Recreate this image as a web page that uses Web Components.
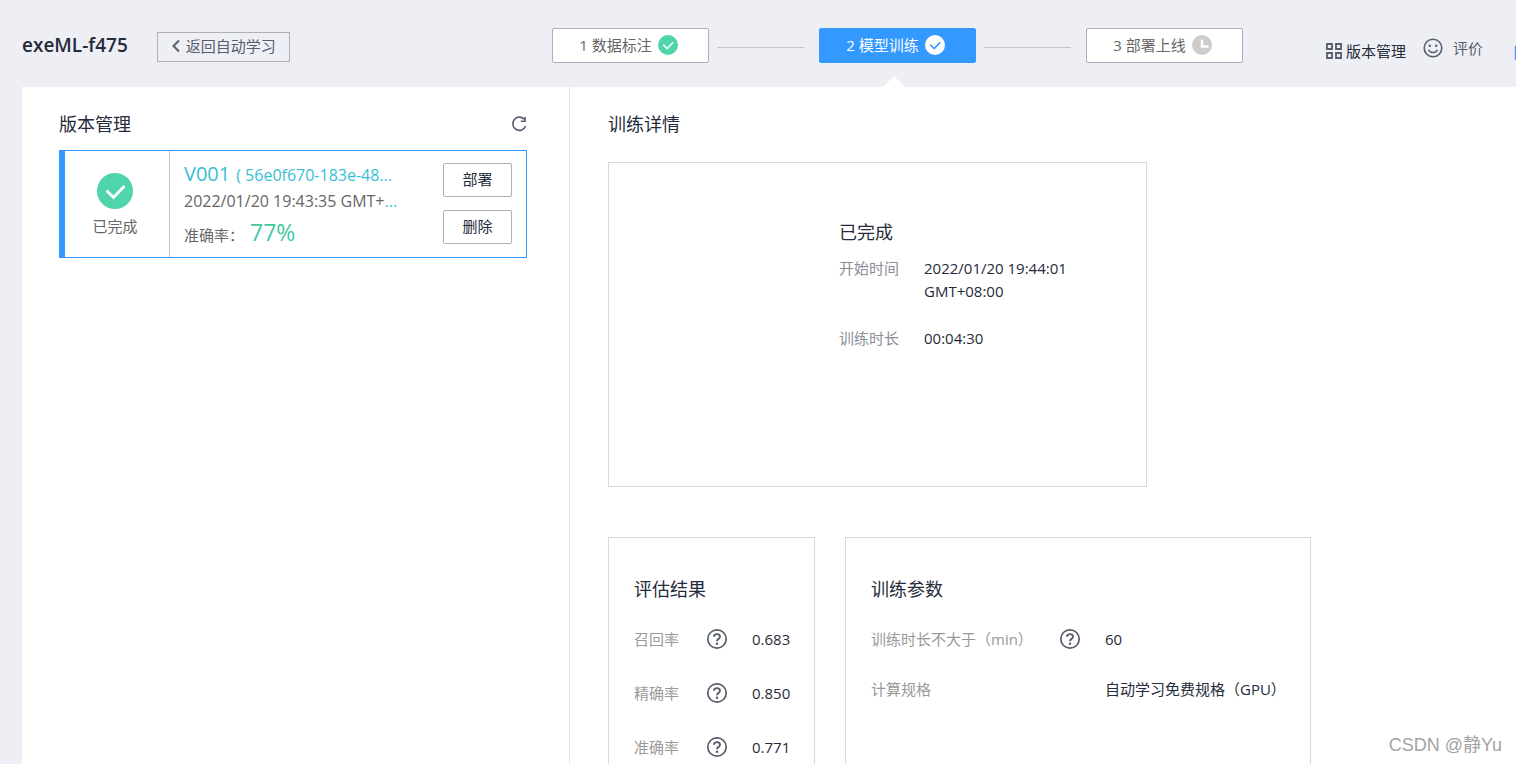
<!DOCTYPE html>
<html lang="zh-CN">
<head>
<meta charset="utf-8">
<title>exeML-f475</title>
<style>
html, body { margin: 0; height: 100%; }
body {
  --ink: #252b3a; --grey: #575d6c; --muted: #999; --blue: #3399ff; --green: #50d4ab; --line: #d9d9d9;
  background: #eeeff5; color: var(--ink); overflow: hidden;
  font: 15px/24px "Open Sans", "Noto Sans CJK SC", sans-serif;
}
</style>
</head>
<body>
<ml-app></ml-app>
<script>
const define = (name, html) => customElements.define(name, class extends HTMLElement {
  constructor() {
    super();
    const t = document.createElement('template');
    t.innerHTML = html;
    this.attachShadow({ mode: 'open' }).append(t.content);
  }
});

customElements.define('ml-icon', class extends HTMLElement {
  connectedCallback() {
    const art = {
      back: ['0 0 10 14', '<path d="M8 1.5 2.5 7 8 12.5" fill="none" stroke="currentColor" stroke-width="2"/>'],
      check: ['0 0 36 36', '<circle cx="18" cy="18" r="18" fill="currentColor"/><path d="m9.5 17.5 7 7 11-11.5" fill="none" stroke="var(--tick,#fff)" stroke-width="2.8"/>'],
      clock: ['0 0 20 20', '<circle cx="10" cy="10" r="10" fill="#ccc"/><path d="M10 4.500v7h6.500" fill="none" stroke="#fff" stroke-width="2.600"/>'],
      grid: ['0 0 16 16', '<path d="M1 1h5v5H1zM10 1h5v5h-5zM1 10h5v5H1zM10 10h5v5h-5z" fill="none" stroke="currentColor" stroke-width="1.800"/>'],
      smile: ['0 0 20 20', '<circle cx="10" cy="10" r="8.800" fill="none" stroke="currentColor" stroke-width="1.600"/><circle cx="6.800" cy="7.800" r="1.200" fill="currentColor"/><circle cx="13.200" cy="7.800" r="1.200" fill="currentColor"/><path d="M5.500 11.800c1.500 3.500 7.500 3.500 9 0" fill="none" stroke="currentColor" stroke-width="1.500"/>'],
      refresh: ['0 0 16 16', '<path d="M13.200 3.200A6.600 6.600 0 1 0 14.600 10M14 1v4.200H9.800" fill="none" stroke="currentColor" stroke-width="1.600"/>'],
      help: ['0 0 22 22', '<circle cx="11" cy="11" r="9.200" fill="none" stroke="currentColor" stroke-width="1.700"/><path d="M8 8.800C8 5.200 14 5.300 14 8.700c0 2.300-3 2.100-3 4.500" fill="none" stroke="currentColor" stroke-width="1.900"/><circle cx="11" cy="15.800" r="1.200" fill="currentColor"/>']
    }[this.getAttribute('name')];
    const root = this.shadowRoot || this.attachShadow({ mode: 'open' });
    root.innerHTML = `<style>:host{display:block;flex:none}svg{display:block;width:100%;height:100%}</style><svg viewBox="${art[0]}" aria-hidden="true">${art[1]}</svg>`;
  }
});

define('ml-step', `<style>
:host { display: block; position: relative; width: 157px; }
button { font: inherit; color: #666; width: 100%; height: 35px; display: flex; align-items: center; justify-content: center; gap: 6px; padding: 0 4px 2px 0; background: #fff; border: 1px solid #adb0b8; border-radius: 2px; }
:host([active]) button { background: var(--blue); border-color: var(--blue); color: #fff; }
:host([active])::after { content: ""; position: absolute; left: 64px; top: 48px; border: 11px solid transparent; border-top: 0; border-bottom-color: #fff; }
</style><button type="button"><slot></slot><slot name="state"></slot></button>`);

define('ml-header', `<style>
:host { display: grid; grid-template-columns: 1fr auto 273px; height: 87px; padding-left: 22px; box-sizing: border-box; overflow: hidden; }
.left { display: flex; align-items: flex-start; padding-top: 32px; gap: 29px; }
h1 { font-size: 19px; font-weight: 600; line-height: 26px; margin: 0; }
.back { display: flex; align-items: center; gap: 5px; height: 30px; box-sizing: border-box; border: 1px solid #adb0b8; padding: 0 13px 2px; color: var(--grey); text-decoration: none; }
.back ml-icon { width: 10px; height: 14px; }
nav { display: flex; padding-top: 28px; }
hr { width: 87px; height: 1px; border: 0; background: #c3c5cc; margin: 19px 15px 0 8px; }
.s { width: 20px; height: 20px; color: var(--green); }
.on { color: #fff; --tick: var(--blue); }
.right { display: flex; padding: 36px 0 0 83px; align-items: flex-start; }
.right a { display: flex; align-items: center; color: var(--ink); text-decoration: none; }
.ver { gap: 4px; margin-top: 3px; }
.ver ml-icon { width: 16px; height: 16px; color: var(--grey); }
.right .rate { gap: 10px; margin-left: 17px; color: var(--grey); }
.rate ml-icon { width: 20px; height: 20px; }
.more { width: 2px; height: 14px; margin: 10px 0 0 auto; background: linear-gradient(90deg, #e3c8f5 50%, #4aa0f5 50%); }
</style>
<div class="left"><h1>exeML-f475</h1><a class="back" href="#"><ml-icon name="back"></ml-icon>返回自动学习</a></div>
<nav>
<ml-step>1 数据标注<ml-icon slot="state" class="s" name="check"></ml-icon></ml-step><hr>
<ml-step active>2 模型训练<ml-icon slot="state" class="s on" name="check"></ml-icon></ml-step><hr>
<ml-step>3 部署上线<ml-icon slot="state" class="s" name="clock"></ml-icon></ml-step>
</nav>
<div class="right"><a class="ver" href="#"><ml-icon name="grid"></ml-icon>版本管理</a><a class="rate" href="#"><ml-icon name="smile"></ml-icon>评价</a><span class="more"></span></div>`);

define('ml-version', `<style>
:host { display: grid; grid-template-columns: 105px 1fr 69px; border: 1px solid var(--blue); border-left-width: 6px; height: 108px; box-sizing: border-box; padding-right: 14px; color: #666; }
.state { border-right: 1px solid #c3c5cc; display: flex; flex-direction: column; align-items: center; padding-top: 22px; gap: 5px; padding-right: 4px; }
.state ml-icon { width: 36px; height: 36px; color: var(--green); }
.info { padding: 9px 40px 0 14px; min-width: 0; }
.info > * { white-space: nowrap; }
.id { display: flex; align-items: baseline; gap: 6px; color: #38c0d6; text-decoration: none; font-size: 16px; line-height: 28px; }
.id b { font-size: 20px; font-weight: 400; }
.date { font-size: 16px; line-height: 24px; }
.acc { display: flex; align-items: baseline; gap: 6px; line-height: 38px; }
.acc strong { font-weight: 400; font-size: 23px; color: #41c9a0; }
.dots { color: #38c0d6; }
.acts { display: flex; flex-direction: column; gap: 13px; padding-top: 12px; }
button { font: inherit; color: var(--ink); height: 34px; padding: 0 0 2px; background: #fff; border: 1px solid #adb0b8; border-radius: 2px; }
</style>
<div class="state"><ml-icon name="check"></ml-icon><span>已完成</span></div>
<div class="info"><a class="id" href="#"><b>V001</b><span>( 56e0f670-183e-48...</span></a>
<div class="date">2022/01/20 19:43:35 GMT+<span class="dots">...</span></div>
<div class="acc"><span>准确率：</span><strong>77%</strong></div></div>
<div class="acts"><button type="button">部署</button><button type="button">删除</button></div>`);

define('ml-help', `<style>
:host { display: block; width: 22px; height: 22px; }
button { display: block; border: 0; padding: 0; background: none; width: 100%; height: 100%; color: var(--grey); }
ml-icon { width: 100%; height: 100%; }
</style><button type="button" aria-label="帮助"><ml-icon name="help"></ml-icon></button>`);

define('ml-card', `<style>
:host { display: block; border: 1px solid var(--line); box-sizing: border-box; padding: 37px 25px; min-height: 290px; }
h3 { margin: 0 0 24px; font-size: 18px; font-weight: 400; line-height: 28px; }
</style><h3><slot name="title"></slot></h3><slot></slot>`);

define('ml-app', `<style>
:host { display: flex; flex-direction: column; height: 100vh; position: relative; }
main { flex: 1; min-height: 0; margin-left: 22px; background: #fff; display: grid; grid-template-columns: 548px 1fr; }
h2 { font-size: 18px; font-weight: 400; line-height: 28px; margin: 0; }
aside { border-right: 1px solid #dfe1e6; padding: 23px 42px 0 37px; }
.bar { display: flex; justify-content: space-between; align-items: center; margin-bottom: 12px; }
.bar button { border: 0; background: none; padding: 0; width: 16px; height: 16px; color: var(--grey); }
.bar ml-icon { width: 16px; height: 16px; }
.pane { padding: 23px 38px 0; min-width: 0; overflow: hidden; }
.summary { max-width: 539px; height: 325px; box-sizing: border-box; border: 1px solid var(--line); margin: 24px 0 50px; padding: 55px 60px 0 230px; }
.summary h3 { font-size: 18px; font-weight: 400; line-height: 28px; margin: 0 0 11px; }
dl, dd { margin: 0; }
.summary dl { display: grid; grid-template-columns: 61px 150px; gap: 24px; line-height: 23px; }
.summary dt { color: #8a8e99; }
.cards { display: grid; grid-template-columns: 207px minmax(0, 466px); gap: 30px; }
.result, .params { display: grid; align-items: center; }
.result { grid-template-columns: 72px 46px auto; row-gap: 30px; }
.params { grid-template-columns: 188px 46px auto; row-gap: 26px; }
.result dt, .params dt { color: var(--muted); white-space: nowrap; }
.params dd { white-space: nowrap; }
.result dd, .params dd { height: 24px; }
ml-help { margin-top: 1px; }
.mark { position: absolute; right: 14px; bottom: 6px; font: 18px/26px "Liberation Sans", "Noto Sans CJK SC", sans-serif; color: #a3a3a3; }
</style>
<ml-header></ml-header>
<main>
<aside><div class="bar"><h2>版本管理</h2><button type="button" aria-label="刷新"><ml-icon name="refresh"></ml-icon></button></div><ml-version></ml-version></aside>
<section class="pane"><h2>训练详情</h2>
<div class="summary"><h3>已完成</h3><dl><dt>开始时间</dt><dd>2022/01/20 19:44:01 GMT+08:00</dd><dt>训练时长</dt><dd>00:04:30</dd></dl></div>
<div class="cards">
<ml-card><span slot="title">评估结果</span><dl class="result">
<dt>召回率</dt><dd><ml-help></ml-help></dd><dd>0.683</dd>
<dt>精确率</dt><dd><ml-help></ml-help></dd><dd>0.850</dd>
<dt>准确率</dt><dd><ml-help></ml-help></dd><dd>0.771</dd></dl></ml-card>
<ml-card><span slot="title">训练参数</span><dl class="params">
<dt>训练时长不大于（min）</dt><dd><ml-help></ml-help></dd><dd>60</dd>
<dt>计算规格</dt><dd></dd><dd>自动学习免费规格（GPU）</dd></dl></ml-card>
</div></section>
</main>
<div class="mark">CSDN @静Yu</div>`);
</script>
</body>
</html>
